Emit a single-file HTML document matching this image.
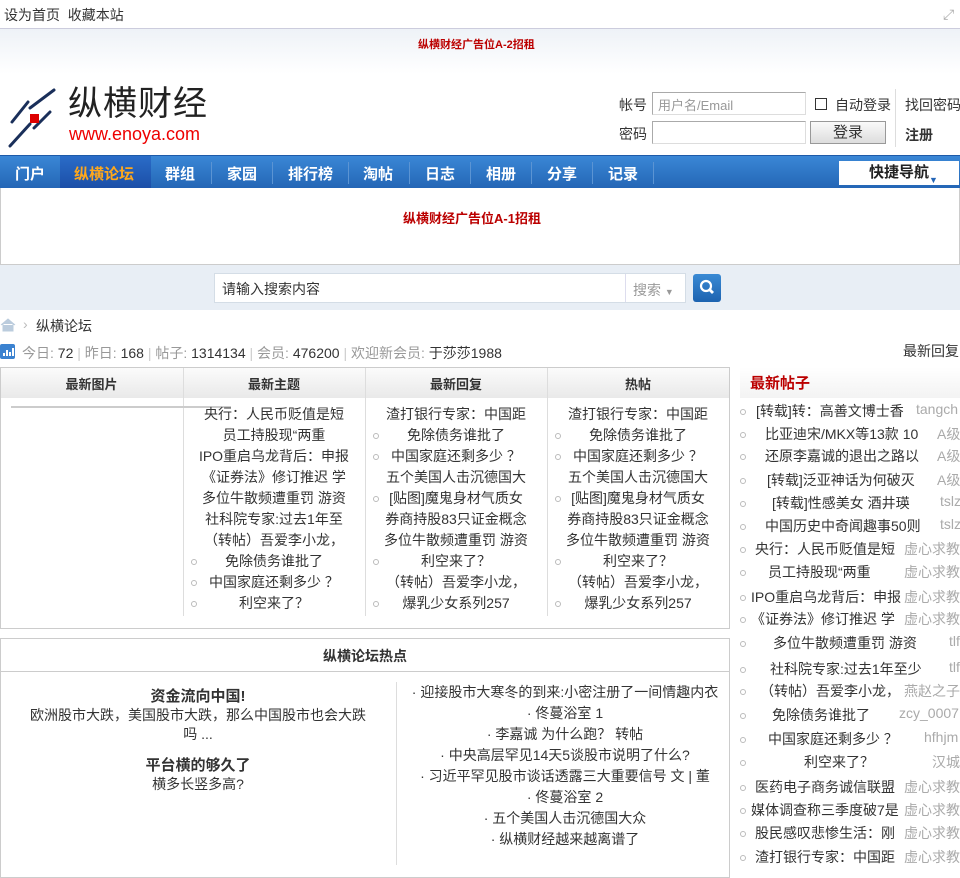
<!DOCTYPE html>
<html><head><meta charset="utf-8"><style>
*{margin:0;padding:0;box-sizing:border-box}
body{width:960px;height:873px;overflow:hidden;background:#fff;font:14px "Liberation Sans","WenQuanYi Zen Hei","Noto Sans CJK SC",sans-serif;color:#333;position:relative}
.a{position:absolute;white-space:nowrap}
.topbar{left:0;top:0;width:960px;height:29px;border-bottom:1px solid #ccd;}
.hdr{left:0;top:29px;width:960px;height:126px;background:linear-gradient(#eef2f7,#fff 45px)}
.nav{left:0;top:155px;width:960px;height:33px;background:linear-gradient(#3a87d6,#2466b6);border-top:1px solid #1d5aa8}
.nav span{position:absolute;top:7px;color:#fff;font-weight:bold;font-size:15px}
.sep{position:absolute;top:6px;width:1px;height:22px;background:#5b94d3}
.inp{position:absolute;border:1px solid #aaa;border-bottom-color:#ddd;border-right-color:#ddd;background:#fff;height:23px}
ul{list-style:none}
.col{position:absolute;top:404px;width:182px;text-align:center;font-size:14px;line-height:21px}
.col div{position:relative}
.dot{position:absolute;left:8px;width:6px;height:6px;border:1px solid #bbb;border-radius:50%;top:8px}
.side div{position:absolute;left:740px;width:220px;height:23px;white-space:nowrap}
.side b{font-weight:normal}
.side i{font-style:normal;color:#aaa;position:absolute}
</style></head><body>
<div class="a topbar"><span class="a" style="left:4px;top:5px">设为首页&nbsp;&nbsp;收藏本站</span>
<span class="a" style="left:943px;top:6px;color:#aaa;font-size:14px">⤢</span></div>
<div class="a hdr"></div>
<div class="a" style="left:418px;top:36px;font-size:11px;color:#b00;font-weight:bold">纵横财经广告位A-2招租</div>
<svg class="a" style="left:8px;top:88px" width="50" height="60" viewBox="0 0 50 60"><g stroke="#1a2f5a" stroke-width="3" stroke-linecap="round"><line x1="4" y1="34" x2="20" y2="14"/><line x1="22" y1="20" x2="46" y2="2"/><line x1="2" y1="58" x2="22" y2="36"/><line x1="26" y1="40" x2="42" y2="24"/></g><rect x="22" y="26" width="9" height="9" fill="#d00"/></svg>
<div class="a" style="left:68px;top:84px;font-size:34px;line-height:40px;color:#222;letter-spacing:1px">纵横财经</div>
<div class="a" style="left:69px;top:124px;font-size:18px;line-height:20px;color:#e00;font-family:'Liberation Sans',sans-serif">www.enoya.com</div>
<span class="a" style="left:619px;top:95px">帐号</span>
<div class="inp" style="left:652px;top:92px;width:154px"><span class="a" style="left:5px;top:2px;color:#999;font-size:13px">用户名/Email</span></div>
<div class="a" style="left:815px;top:98px;width:12px;height:12px;border:1px solid #333"></div>
<span class="a" style="left:835px;top:95px">自动登录</span>
<div class="a" style="left:895px;top:89px;width:1px;height:58px;background:#ddd"></div>
<span class="a" style="left:905px;top:95px">找回密码</span>
<span class="a" style="left:619px;top:124px">密码</span>
<div class="inp" style="left:652px;top:121px;width:154px"></div>
<div class="a" style="left:810px;top:121px;width:76px;height:23px;border:1px solid #999;background:linear-gradient(#fafafa,#ddd);text-align:center;line-height:21px;font-size:15px">登录</div>
<span class="a" style="left:905px;top:125px;font-weight:bold">注册</span>
<div class="a nav">
<div class="a" style="left:60px;top:0;width:91px;height:32px;background:linear-gradient(#2a6cc8,#1c4fa8)"></div>
<span style="left:15px">门户</span><span style="left:74px;color:#ffa81c">纵横论坛</span><span style="left:165px">群组</span><span style="left:227px">家园</span><span style="left:288px">排行榜</span><span style="left:363px">淘帖</span><span style="left:425px">日志</span><span style="left:486px">相册</span><span style="left:547px">分享</span><span style="left:608px">记录</span>
<i class="sep" style="left:211px"></i><i class="sep" style="left:272px"></i><i class="sep" style="left:348px"></i><i class="sep" style="left:409px"></i><i class="sep" style="left:470px"></i><i class="sep" style="left:531px"></i><i class="sep" style="left:592px"></i><i class="sep" style="left:653px"></i>
<div class="a" style="left:839px;top:5px;width:120px;height:24px;background:#fff;color:#222;font-weight:bold;font-size:15px;text-align:center;line-height:24px">快捷导航<span style="color:#2466b6;font-size:9px">▼</span></div>
</div>
<div class="a" style="left:0;top:188px;width:960px;height:77px;border:1px solid #ccc;border-top:0"></div>
<div class="a" style="left:403px;top:208px;font-size:13px;color:#b00;font-weight:bold">纵横财经广告位A-1招租</div>
<div class="a" style="left:0;top:265px;width:960px;height:45px;background:#e8eef5"></div>
<div class="a" style="left:214px;top:273px;width:472px;height:30px;background:#fff;border:1px solid #d4dde6"></div>
<span class="a" style="left:222px;top:279px">请输入搜索内容</span>
<div class="a" style="left:625px;top:274px;width:1px;height:28px;background:#dde"></div>
<span class="a" style="left:633px;top:280px;color:#999">搜索 <span style="font-size:9px">▼</span></span>
<div class="a" style="left:693px;top:274px;width:28px;height:28px;background:linear-gradient(#3a8ad4,#1d63b0);border-radius:3px"><svg width="28" height="28"><circle cx="13" cy="12" r="5" fill="none" stroke="#fff" stroke-width="2.2"/><line x1="16.5" y1="15.5" x2="20" y2="19" stroke="#fff" stroke-width="2.8"/></svg></div>
<svg class="a" style="left:0;top:318px" width="16" height="14"><path d="M1 7 L8 1 L15 7 M3 6 V13 H13 V6" fill="#bcd" stroke="#bcd"/></svg>
<span class="a" style="left:23px;top:316px;color:#bbb">›</span>
<span class="a" style="left:36px;top:316px">纵横论坛</span>
<div class="a" style="left:0;top:344px;width:15px;height:15px;background:#3b82d0;border-radius:2px"><svg width="15" height="15"><g fill="#fff"><rect x="3" y="9" width="2" height="3"/><rect x="6" y="6" width="2" height="6"/><rect x="9" y="8" width="2" height="4"/><rect x="12" y="4" width="2" height="8"/></g></svg></div>
<div class="a" style="left:22px;top:343px;color:#999">今日: <span style="color:#333">72</span> <span style="color:#ccc">|</span> 昨日: <span style="color:#333">168</span> <span style="color:#ccc">|</span> 帖子: <span style="color:#333">1314134</span> <span style="color:#ccc">|</span> 会员: <span style="color:#333">476200</span> <span style="color:#ccc">|</span> 欢迎新会员: <span style="color:#333">于莎莎1988</span></div>
<span class="a" style="left:903px;top:341px">最新回复</span>
<div class="a" style="left:0;top:367px;width:730px;height:262px;border:1px solid #ccc"></div>
<div class="a" style="left:1px;top:368px;width:728px;height:30px;background:linear-gradient(#fbfbfb,#e9e9e9)"></div>
<div class="a" style="left:183px;top:368px;width:1px;height:248px;background:#ddd"></div>
<div class="a" style="left:365px;top:368px;width:1px;height:248px;background:#ddd"></div>
<div class="a" style="left:547px;top:368px;width:1px;height:248px;background:#ddd"></div>
<div class="a" style="top:374px;left:0;width:183px;text-align:center;font-weight:bold;font-size:13px">最新图片</div>
<div class="a" style="top:374px;left:183px;width:182px;text-align:center;font-weight:bold;font-size:13px">最新主题</div>
<div class="a" style="top:374px;left:365px;width:182px;text-align:center;font-weight:bold;font-size:13px">最新回复</div>
<div class="a" style="top:374px;left:547px;width:182px;text-align:center;font-weight:bold;font-size:13px">热帖</div>
<div class="a" style="left:11px;top:406px;width:220px;height:2px;background:#ccc"></div>
<div class="col" style="left:183px"><div>央行：人民币贬值是短</div><div>员工持股现“两重</div><div>IPO重启乌龙背后：申报</div><div>《证券法》修订推迟 学</div><div>多位牛散频遭重罚 游资</div><div>社科院专家:过去1年至</div><div>（转帖）吾爱李小龙，</div><div><i class="dot"></i>免除债务谁批了</div><div><i class="dot"></i>中国家庭还剩多少 ？</div><div><i class="dot"></i>利空来了？</div></div>
<div class="col" style="left:365px"><div>渣打银行专家：中国距</div><div><i class="dot"></i>免除债务谁批了</div><div><i class="dot"></i>中国家庭还剩多少 ？</div><div>五个美国人击沉德国大</div><div><i class="dot"></i>[贴图]魔鬼身材气质女</div><div>券商持股83只证金概念</div><div>多位牛散频遭重罚 游资</div><div><i class="dot"></i>利空来了？</div><div>（转帖）吾爱李小龙，</div><div><i class="dot"></i>爆乳少女系列257</div></div>
<div class="col" style="left:547px"><div>渣打银行专家：中国距</div><div><i class="dot"></i>免除债务谁批了</div><div><i class="dot"></i>中国家庭还剩多少 ？</div><div>五个美国人击沉德国大</div><div><i class="dot"></i>[贴图]魔鬼身材气质女</div><div>券商持股83只证金概念</div><div>多位牛散频遭重罚 游资</div><div><i class="dot"></i>利空来了？</div><div>（转帖）吾爱李小龙，</div><div><i class="dot"></i>爆乳少女系列257</div></div>
<div class="a" style="left:740px;top:367px;width:220px;height:31px;background:linear-gradient(#fff,#f3f3f3)"></div>
<span class="a" style="left:750px;top:372px;color:#b00;font-weight:bold;font-size:15px">最新帖子</span>
<div class="side" style="font-size:14px">
<div style="top:401px"><i class="dot" style="left:0"></i><b class="a" style="left:16px">[转载]转：高善文博士香</b><i style="left:176px">tangch</i></div>
<div style="top:424px"><i class="dot" style="left:0"></i><b class="a" style="left:25px">比亚迪宋/MKX等13款 10</b><i style="left:197px">A级</i></div>
<div style="top:446px"><i class="dot" style="left:0"></i><b class="a" style="left:25px">还原李嘉诚的退出之路以</b><i style="left:197px">A级</i></div>
<div style="top:470px"><i class="dot" style="left:0"></i><b class="a" style="left:27px">[转载]泛亚神话为何破灭</b><i style="left:197px">A级</i></div>
<div style="top:493px"><i class="dot" style="left:0"></i><b class="a" style="left:32px">[转载]性感美女 酒井瑛</b><i style="left:200px">tslz</i></div>
<div style="top:516px"><i class="dot" style="left:0"></i><b class="a" style="left:25px">中国历史中奇闻趣事50则</b><i style="left:200px">tslz</i></div>
<div style="top:539px"><i class="dot" style="left:0"></i><b class="a" style="left:15px">央行：人民币贬值是短</b><i style="left:164px">虚心求教</i></div>
<div style="top:562px"><i class="dot" style="left:0"></i><b class="a" style="left:28px">员工持股现“两重</b><i style="left:164px">虚心求教</i></div>
<div style="top:587px"><i class="dot" style="left:0"></i><b class="a" style="left:11px">IPO重启乌龙背后：申报</b><i style="left:164px">虚心求教</i></div>
<div style="top:609px"><i class="dot" style="left:0"></i><b class="a" style="left:11px">《证券法》修订推迟 学</b><i style="left:164px">虚心求教</i></div>
<div style="top:633px"><i class="dot" style="left:0"></i><b class="a" style="left:33px">多位牛散频遭重罚 游资</b><i style="left:209px">tlf</i></div>
<div style="top:659px"><i class="dot" style="left:0"></i><b class="a" style="left:30px">社科院专家:过去1年至少</b><i style="left:209px">tlf</i></div>
<div style="top:681px"><i class="dot" style="left:0"></i><b class="a" style="left:20px">（转帖）吾爱李小龙，</b><i style="left:164px">燕赵之子</i></div>
<div style="top:705px"><i class="dot" style="left:0"></i><b class="a" style="left:32px">免除债务谁批了</b><i style="left:159px">zcy_0007</i></div>
<div style="top:729px"><i class="dot" style="left:0"></i><b class="a" style="left:28px">中国家庭还剩多少 ？</b><i style="left:184px">hfhjm</i></div>
<div style="top:752px"><i class="dot" style="left:0"></i><b class="a" style="left:64px">利空来了？</b><i style="left:192px">汉城</i></div>
<div style="top:777px"><i class="dot" style="left:0"></i><b class="a" style="left:15px">医药电子商务诚信联盟</b><i style="left:164px">虚心求教</i></div>
<div style="top:800px"><i class="dot" style="left:0"></i><b class="a" style="left:11px">媒体调查称三季度破7是</b><i style="left:164px">虚心求教</i></div>
<div style="top:823px"><i class="dot" style="left:0"></i><b class="a" style="left:15px">股民感叹悲惨生活：刚</b><i style="left:164px">虚心求教</i></div>
<div style="top:847px"><i class="dot" style="left:0"></i><b class="a" style="left:15px">渣打银行专家：中国距</b><i style="left:164px">虚心求教</i></div>
</div>
<div class="a" style="left:0;top:638px;width:730px;height:240px;border:1px solid #ccc"></div>
<div class="a" style="left:1px;top:671px;width:728px;height:1px;background:#ccc"></div>
<div class="a" style="left:0;top:646px;width:730px;text-align:center;font-weight:bold">纵横论坛热点</div>
<div class="a" style="left:396px;top:682px;width:1px;height:183px;background:#ddd"></div>
<div class="a" style="left:0;top:687px;width:396px;text-align:center;line-height:19px">
<div style="font-weight:bold;font-size:15px">资金流向中国!</div>
<div style="padding:0 24px;white-space:normal">欧洲股市大跌，美国股市大跌，那么中国股市也会大跌吗 ...</div>
<div style="font-weight:bold;font-size:15px;margin-top:12px">平台横的够久了</div>
<div>横多长竖多高?</div></div>
<div class="a" style="left:400px;top:682px;width:330px;text-align:center;line-height:21px">
<div>· 迎接股市大寒冬的到来:小密注册了一间情趣内衣</div><div>· 佟蔓浴室 1</div><div>· 李嘉诚 为什么跑？ 转帖</div><div>· 中央高层罕见14天5谈股市说明了什么?</div><div>· 习近平罕见股市谈话透露三大重要信号 文 | 董</div><div>· 佟蔓浴室 2</div><div>· 五个美国人击沉德国大众</div><div>· 纵横财经越来越离谱了</div></div>
</body></html>
